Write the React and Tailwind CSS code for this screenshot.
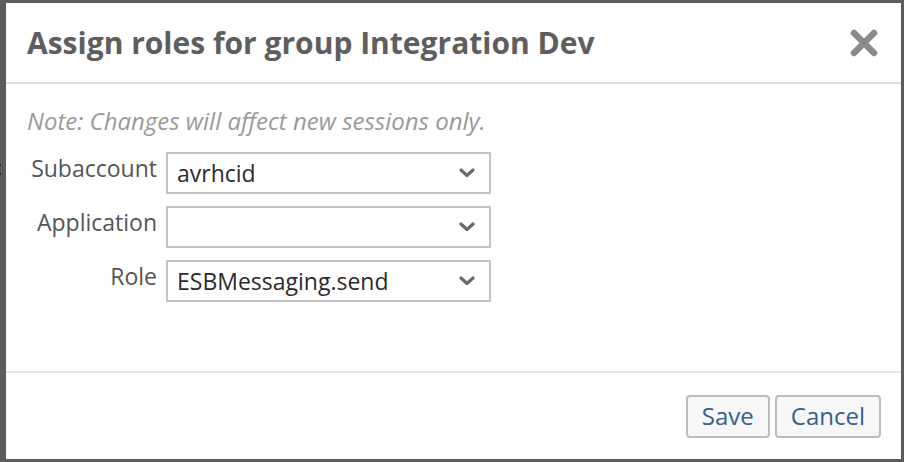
import React from 'react';

const Chevron = () => (
  <svg width="16" height="10" viewBox="0 0 16 10" className="shrink-0">
    <path d="M2 2 L8 7.5 L14 2" fill="none" stroke="#6a6a6a" strokeWidth="3.2" strokeLinecap="round" strokeLinejoin="round" />
  </svg>
);

const SelectRow = ({ label, value }) => (
  <div className="flex items-start">
    <div className="w-[160px] pt-[1px] pr-[9px] text-right text-[23px] leading-[30px] text-[#555555]">{label}</div>
    <div className="flex h-[42px] w-[325px] items-center justify-between border-2 border-[#c4c4c4] bg-white pl-[9px] pr-[14px]">
      <span className="text-[23px] leading-[30px] text-[#2b2b2b]">{value}</span>
      <Chevron />
    </div>
  </div>
);

const App = () => {
  return (
    <div className="flex h-[462px] w-[904px] bg-[#5c5c5c] pt-[3px] pr-[3px] pb-[3px]" style={{ fontFamily: '"Open Sans", "Noto Sans", sans-serif' }}>
      <div className="w-[6px] overflow-hidden">
        <div className="ml-[-8px] mt-[154px] text-[20px] leading-[22px] text-black">c</div>
      </div>
      <div className="flex flex-1 flex-col bg-white">
        <div className="flex h-[81px] items-center justify-between border-b-2 border-[#d6e0ea] pl-[21px] pr-[22px]">
          <h1 className="text-[30px] font-bold text-[#5e5e5e]">Assign roles for group Integration Dev</h1>
          <svg width="30" height="30" viewBox="0 0 30 30">
            <path d="M5 5 L25 25 M25 5 L5 25" stroke="#8a8a8a" strokeWidth="6.5" strokeLinecap="round" />
          </svg>
        </div>
        <div className="flex-1 pt-[21px]">
          <p className="pl-[21px] text-[24px] italic leading-[32px] text-[#9a9a9a]">Note: Changes will affect new sessions only.</p>
          <div className="mt-[15px] flex flex-col gap-[12px]">
            <SelectRow label="Subaccount" value="avrhcid" />
            <SelectRow label="Application" value="" />
            <SelectRow label="Role" value="ESBMessaging.send" />
          </div>
        </div>
        <div className="flex h-[88px] items-center justify-end gap-[5px] border-t-2 border-[#e6e6e6] pr-[20px]">
          <button className="h-[43px] rounded-[4px] border-2 border-[#bdbdbd] bg-[#f7f7f7] px-[14px] text-[24px] leading-[30px] text-[#33628c]">Save</button>
          <button className="h-[43px] rounded-[4px] border-2 border-[#bdbdbd] bg-[#f7f7f7] px-[14px] text-[24px] leading-[30px] text-[#33628c]">Cancel</button>
        </div>
      </div>
    </div>
  );
};

export default App;
